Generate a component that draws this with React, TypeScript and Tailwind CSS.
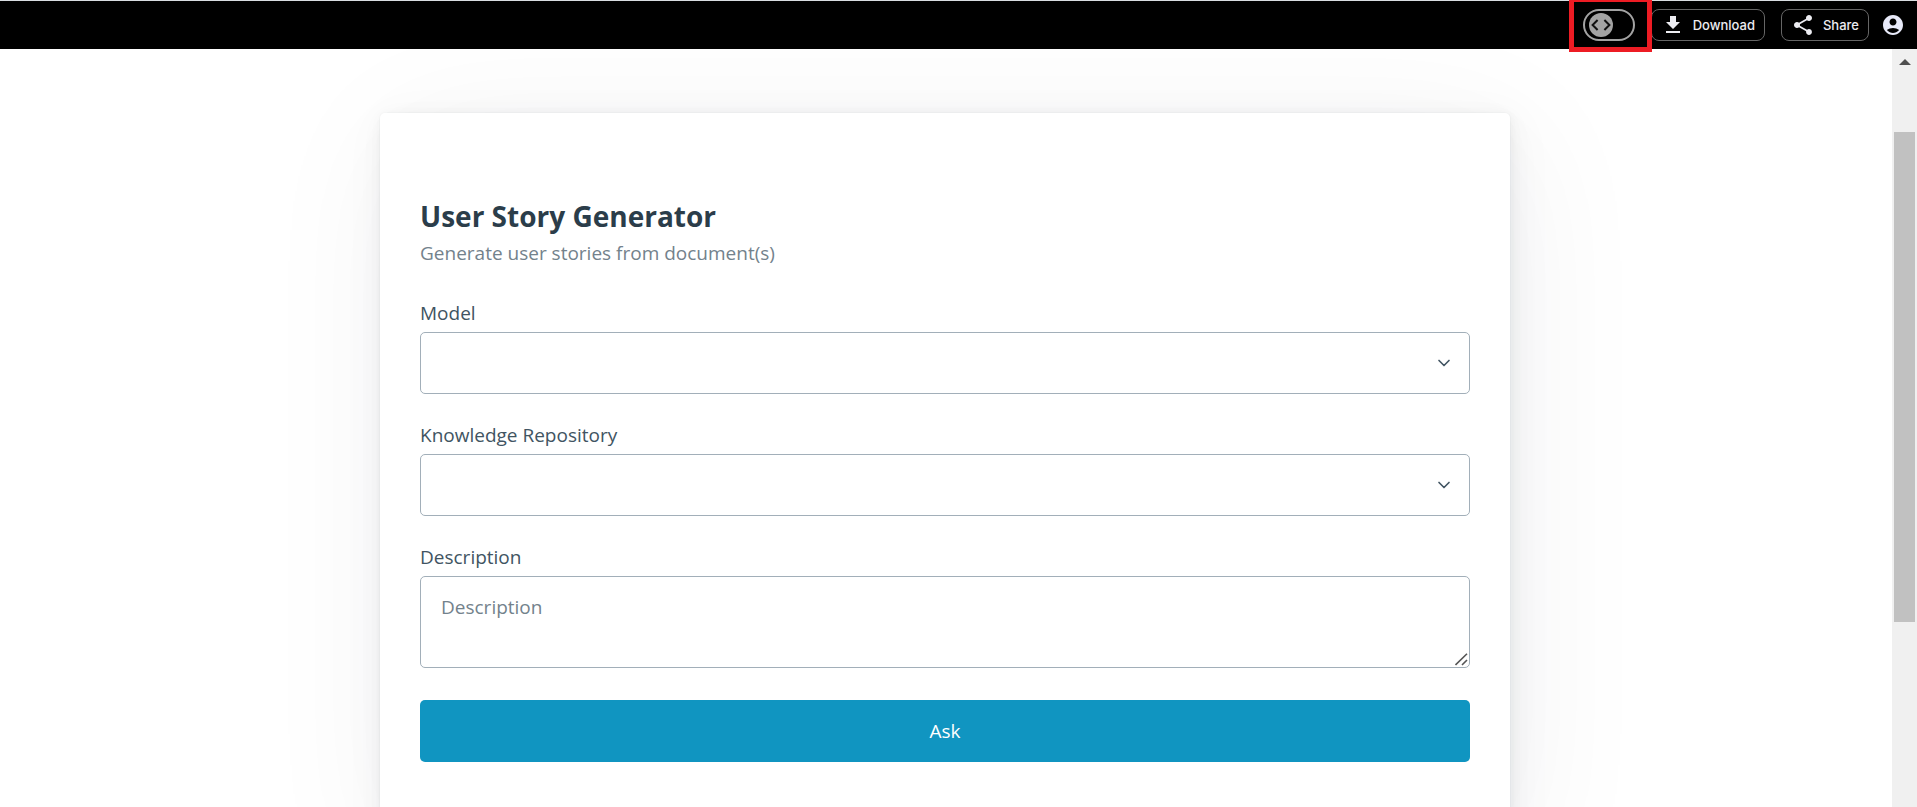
import React from "react";

const fieldClass =
  "block w-full appearance-none rounded-[5px] border border-[#a2afb9] bg-white px-5 py-[15px] text-[19px] leading-[30px] text-[#415462] placeholder:text-[#73828c] placeholder:opacity-100 outline-none";

const headerButtonClass =
  "flex h-8 items-center gap-2 rounded-lg border border-[#666] px-[9px] text-[13px] leading-5 font-medium text-[#ececf1]";

function CodeToggle() {
  return (
    <div className="relative mr-4 flex items-center">
      <button
        type="button"
        role="switch"
        aria-checked="false"
        aria-label="Show code"
        className="flex h-8 w-13 items-center rounded-full border-2 border-[#a3a3a3] pl-1"
      >
        <svg width="24" height="24" viewBox="0 0 24 24" aria-hidden="true">
          <circle cx="12" cy="12" r="12" fill="#a3a3a3" />
          <path
            d="M8.600 7 3.600 12l5 5M15.400 7l5 5-5 5"
            fill="none"
            stroke="#111"
            strokeWidth="2"
          />
        </svg>
      </button>
      <div className="pointer-events-none absolute -top-3 -left-3.5 z-20 h-[55px] w-[83px] border-5 border-[#ed1c24]" />
    </div>
  );
}

function Header() {
  return (
    <header className="relative z-10 flex h-[49px] shrink-0 items-center justify-end border-t border-[#d9dde1] bg-black pr-3 font-[Inter,sans-serif]">
      <CodeToggle />
      <button type="button" className={`${headerButtonClass} mr-4`}>
        <svg width="24" height="24" viewBox="0 0 24 24" fill="#ececf1" aria-hidden="true">
          <path d="M19 9h-4V3H9v6H5l7 7 7-7zM5 18v2h14v-2H5z" />
        </svg>
        Download
      </button>
      <button type="button" className={`${headerButtonClass} mr-3`}>
        <svg width="24" height="24" viewBox="0 0 24 24" fill="#ececf1" aria-hidden="true">
          <path d="M18 16.080c-.76 0-1.440.3-1.960.77L8.910 12.700c.05-.23.09-.46.09-.7s-.04-.47-.09-.7l7.050-4.110c.54.5 1.250.81 2.040.81 1.660 0 3-1.340 3-3s-1.340-3-3-3-3 1.340-3 3c0 .24.04.47.09.7L8.040 9.810C7.500 9.310 6.790 9 6 9c-1.660 0-3 1.340-3 3s1.340 3 3 3c.79 0 1.500-.31 2.040-.81l7.120 4.160c-.05.21-.08.43-.08.65 0 1.610 1.310 2.920 2.920 2.920s2.920-1.310 2.920-2.920-1.310-2.920-2.920-2.920z" />
        </svg>
        Share
      </button>
      <button type="button" aria-label="Account">
        <svg width="24" height="24" viewBox="0 0 24 24" fill="#e8eaf9" aria-hidden="true">
          <path d="M12 2C6.480 2 2 6.480 2 12s4.480 10 10 10 10-4.480 10-10S17.520 2 12 2zm0 3.500c1.930 0 3.500 1.570 3.500 3.500s-1.570 3.500-3.500 3.500-3.500-1.570-3.500-3.500S10.070 5.500 12 5.500zm0 14.500c-2.030 0-4.430-.82-6.140-2.880C7.550 15.800 9.680 15 12 15s4.450.8 6.140 2.120C16.430 19.180 14.030 20 12 20z" />
        </svg>
      </button>
    </header>
  );
}

function SelectField({ id, label }: { id: string; label: string }) {
  return (
    <div className="mb-[26px]">
      <label htmlFor={id} className="mb-1 block">
        {label}
      </label>
      <div className="relative">
        <select id={id} defaultValue="" className={`${fieldClass} h-[62px]`}>
          <option value="" />
        </select>
        <svg
          className="pointer-events-none absolute top-[21px] right-4"
          width="20"
          height="20"
          viewBox="0 0 24 24"
          fill="none"
          stroke="#415462"
          strokeWidth="2"
          strokeLinecap="round"
          strokeLinejoin="round"
          aria-hidden="true"
        >
          <path d="m6 9 6 6 6-6" />
        </svg>
      </div>
    </div>
  );
}

function ScrollTrack() {
  return (
    <div className="flex w-[25px] shrink-0 flex-col items-center bg-[#f0f0f0] pt-2.5" aria-hidden="true">
      <svg width="12" height="6" viewBox="0 0 12 6" className="mb-[67px] shrink-0">
        <path d="M6 0 12 6H0z" fill="#505050" />
      </svg>
      <div className="h-[490px] w-[21px] bg-[#c1c1c1]" />
    </div>
  );
}

export default function App() {
  return (
    <div className="flex h-screen flex-col overflow-hidden bg-white font-['Segoe_UI','Open_Sans',sans-serif] text-[19px] leading-[30px] text-[#415462]">
      <Header />
      <div className="flex min-h-0 flex-1">
        <main className="min-w-0 flex-1 overflow-hidden pt-16 pr-0.5">
          <article className="mx-auto min-h-full w-full max-w-[1130px] rounded-[5px] bg-white px-10 pt-[83px] pb-20 shadow-[0_1px_3px_rgba(27,40,50,0.017),1px_1px_8px_rgba(27,40,50,0.024),1px_3px_15px_rgba(27,40,50,0.03),2px_5px_27px_rgba(27,40,50,0.036),4px_8px_50px_rgba(27,40,50,0.04),10px_20px_144px_rgba(27,40,50,0.055),0_0_0_1px_rgba(27,40,50,0.015)]">
            <h1 className="mb-0.5 text-[28px] leading-[40px] font-bold text-[#2b3d4a]">
              User Story Generator
            </h1>
            <p className="mb-[30px] text-[#73828c]">Generate user stories from document(s)</p>
            <form onSubmit={(e: React.FormEvent) => e.preventDefault()}>
              <SelectField id="model" label="Model" />
              <SelectField id="repository" label="Knowledge Repository" />
              <label htmlFor="description" className="mb-1 block">
                Description
              </label>
              <div className="relative mb-8">
                <textarea
                  id="description"
                  rows={2}
                  placeholder="Description"
                  className={`${fieldClass} resize-none`}
                />
                <svg
                  className="pointer-events-none absolute right-0.5 bottom-0.5"
                  width="13"
                  height="13"
                  viewBox="0 0 13 13"
                  fill="none"
                  stroke="#555"
                  strokeWidth="1.6"
                  aria-hidden="true"
                >
                  <path d="M.5 12 12 .8M7 12l5-5" />
                </svg>
              </div>
              <button
                type="submit"
                className="block w-full rounded-[5px] bg-[#1095c1] px-5 py-4 text-center text-white"
              >
                Ask
              </button>
            </form>
          </article>
        </main>
        <ScrollTrack />
      </div>
    </div>
  );
}
